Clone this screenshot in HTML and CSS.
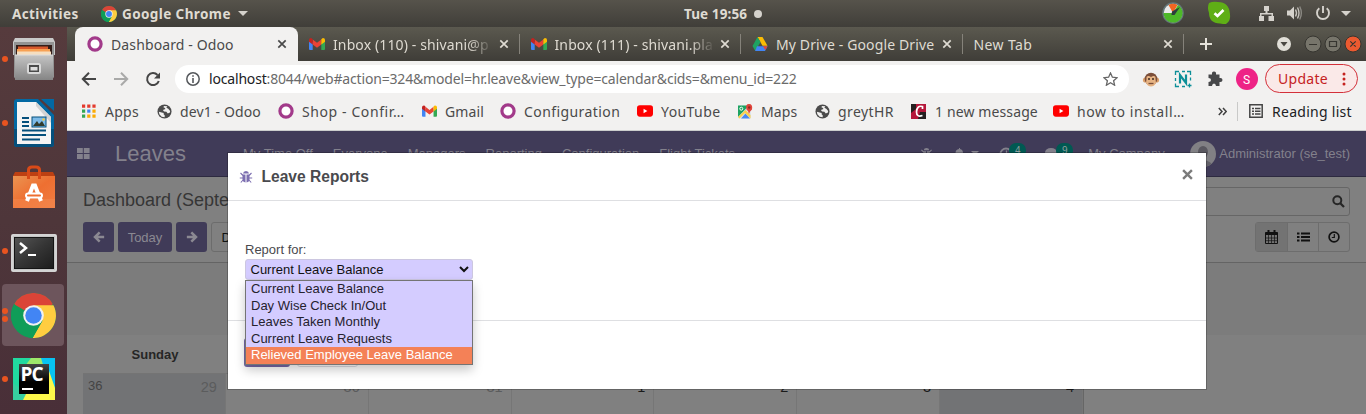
FILE: index.html
```html
<!DOCTYPE html>
<html lang="en">
<head>
<meta charset="utf-8">
<title>Dashboard - Odoo</title>
<link rel="stylesheet" href="styles.css">
</head>
<body>
<svg class="defs" width="0" height="0">
  <defs>
    <linearGradient id="metal" x1="0" y1="0" x2="0" y2="1"><stop offset="0" stop-color="#c4c4c4"/><stop offset="1" stop-color="#858585"/></linearGradient>
    <linearGradient id="bag" x1="0" y1="0" x2="1" y2="1"><stop offset="0" stop-color="#ea9452"/><stop offset=".5" stop-color="#ee6f31"/><stop offset="1" stop-color="#f07d43"/></linearGradient>
    <linearGradient id="screen" x1="0" y1="0" x2="1" y2="1"><stop offset="0" stop-color="#555"/><stop offset=".5" stop-color="#353535"/><stop offset="1" stop-color="#1c1c1c"/></linearGradient>
    <linearGradient id="pcbg" x1="0" y1="0" x2="0" y2="1"><stop offset="0" stop-color="#444"/><stop offset=".6" stop-color="#000"/></linearGradient>
    <symbol id="chrome" viewBox="0 0 48 48">
      <circle cx="24" cy="24" r="24" fill="#109d58"/>
      <path d="M24 24L3.2 12A24 24 0 0 1 44.8 12Z" fill="#db4437"/>
      <path d="M24 13H45.3A24 24 0 0 1 23 48L33.5 29.5Z" fill="#ffcd40"/>
      <path d="M3.6 11.4L14.5 29.5L24 35L33.5 29.5L23 48A24 24 0 0 1 3.6 11.4Z" fill="#109d58"/>
      <circle cx="24" cy="24" r="11" fill="#f1f1f1"/><circle cx="24" cy="24" r="8.8" fill="#4285f4"/>
    </symbol>
    <symbol id="gmail" viewBox="0 0 16 12">
      <path d="M0 2V11Q0 12 1 12H3.7V4.5Z" fill="#4285f4"/><path d="M16 2V11Q16 12 15 12H12.3V4.5Z" fill="#34a853"/>
      <path d="M3.7 1.5L8 4.8L12.3 1.5V6.5L8 9.8L3.7 6.5Z" fill="#ea4335"/>
      <path d="M0 2Q0 0 2 0Q3 0 3.7 1.5V6.5L0 3.7Z" fill="#c5221f"/><path d="M16 2Q16 0 14 0Q13 0 12.3 1.5V6.5L16 3.7Z" fill="#fbbc04"/>
    </symbol>
    <symbol id="ring" viewBox="0 0 16 16"><circle cx="8" cy="8" r="6.1" fill="#fff" stroke="#a23a8a" stroke-width="3.2"/></symbol>
    <symbol id="globe" viewBox="0 0 16 16"><circle cx="8" cy="8" r="7.5" fill="#4b4b4b"/><path d="M2 8.3L5 9L7.2 9.5L7 11L8.2 12V14L5 13.5L2.5 11ZM7.3 2L11 2.5L10 4L12 5L14 7.5L13.8 9L11.5 10L10 8.2L7.5 8L6.3 6.5L9 5.2L8.2 4L7 3.8Z" fill="#f2f1f0"/></symbol>
    <symbol id="youtube" viewBox="0 0 17 12"><rect width="17" height="12" rx="3" fill="#f00"/><path d="M7 3.5L11 6L7 8.5Z" fill="#fff"/></symbol>
    <symbol id="x" viewBox="0 0 10 10"><path d="M1.3 1.3L8.7 8.7M8.7 1.3L1.3 8.7" stroke="currentColor" stroke-width="1.7" fill="none"/></symbol>
    <symbol id="bug" viewBox="0 0 14 14"><path d="M4 3.500Q4.300 1 7 1T10 3.500ZM3.500 4.500H6.500V12.500Q3.500 12 3.500 9ZM7.500 4.500H10.500V9Q10.500 12 7.500 12.500Z" fill="currentColor"/><path d="M1.500 3L4 5.500M12.500 3L10 5.500M.8 8H4M13.200 8H10M1.800 12.500L4.500 9.500M12.200 12.500L9.500 9.500" stroke="currentColor" stroke-width="1.100"/></symbol>
    <symbol id="arrow" viewBox="0 0 14 14"><path d="M13 7H3M7.800 1.500L2.300 7L7.800 12.500" fill="none" stroke="currentColor" stroke-width="2.900"/></symbol>
  </defs>
</svg>

<header class="topbar">
  <span class="t activities">Activities</span>
  <svg class="top-chrome" width="16" height="16"><use href="#chrome"/></svg>
  <span class="t appname">Google Chrome</span>
  <svg class="caret" width="10" height="5"><path d="M0 0H10L5 5Z" fill="#d5d2cc"/></svg>
  <span class="t clock">Tue 19:56</span><i class="clock-dot"></i>
  <svg class="tray" width="200" height="27" viewBox="1160 0 200 27">
    <circle cx="1173" cy="13" r="10" fill="#e9e9e9" stroke="#64777a" stroke-width="1.500"/>
    <path d="M1163.500 13A9.500 9.500 0 1 0 1178 5L1173 13Z" fill="#4db828"/><path d="M1173 13L1168.500 5Q1173 2.500 1177.500 5Z" fill="#f26522"/><path d="M1171.500 15L1172 11.500L1180 7L1174.500 15Z" fill="#2d3d3d"/>
    <path d="M1209 3Q1213 1 1218 2Q1229 2 1230 14Q1231 21 1226 24Q1223 24 1220 23.500Q1209 23 1209 13Q1207 7 1209 3Z" fill="#5fae16"/><path d="M1214.500 13.200L1217.500 16L1223.500 10" fill="none" stroke="#fff" stroke-width="2.600"/>
    <path d="M1264 6H1269V11H1267.500V13H1273V16H1274V21H1268.500V16H1271.500V14.500H1261.500V16H1264V21H1259V16H1260V13H1265.500V11H1264Z" fill="#d5d2cc"/>
    <path d="M1287 10.500H1290L1294 6.500V19.500L1290 15.500H1287Z" fill="#d5d2cc"/><path d="M1295.500 9.500Q1297.500 13 1295.500 16.500M1297.500 7.500Q1300.500 13 1297.500 18.500" fill="none" stroke="#c5c2bc" stroke-width="1.400"/><path d="M1299.700 6.500Q1303 13 1299.700 19.500" fill="none" stroke="#8b8983" stroke-width="1.400"/>
    <path d="M1319.300 8.300A6 6 0 1 0 1326.700 8.300M1323 6V13" fill="none" stroke="#d5d2cc" stroke-width="1.900"/>
    <path d="M1341 11H1351L1346 16Z" fill="#d5d2cc"/>
  </svg>
</header>

<div class="desktop">
  <nav class="dock">
    <div class="app"><i class="dot"></i>
      <svg width="42" height="45" viewBox="0 0 42 45"><path d="M2 1H40L42 5V18H0V5Z" fill="#c9c9c9"/><path d="M1 5H41V40L39 43H3L1 40Z" fill="#929292"/><rect x="3" y="8" width="36" height="10" fill="#351e1a"/><path d="M5 9.500H35V17H5Z" fill="#d8592b"/><path d="M4 12H37V18H4Z" fill="#f7a154"/><path d="M4 14.500H38V18H4Z" fill="#f5dec0"/><path d="M2 18H40V43H2Z" fill="url(#metal)"/><path d="M2 18H40" stroke="#ddd"/><rect x="14" y="26" width="14" height="11" rx="2.500" fill="#d8d8d8"/><rect x="16" y="28" width="10" height="7" fill="#4a4a4a"/><rect x="17.500" y="30" width="7" height="3.500" fill="#ddd"/></svg></div>
    <div class="app"><i class="dot"></i>
      <svg width="40" height="48" viewBox="0 0 40 48"><path d="M3 0H24L40 16V45Q40 48 37 48H3Q0 48 0 45V3Q0 0 3 0Z" fill="#0369a3"/><path d="M0 30H40V45Q40 48 37 48H3Q0 48 0 45Z" fill="#05507c"/><path d="M27 0H40V12Z" fill="#0369a3"/><path d="M3 3H22L37 18V45H3Z" fill="#f4f4f4"/><path d="M22 3L37 18V24L22 7Z" fill="#d3d3d3"/><path d="M8 19H15M8 23H15M8 27H15M8 31.500H32M8 36H32M8 40.500H26" stroke="#05507c" stroke-width="2"/><rect x="18" y="18" width="14" height="10" fill="#7dbbe8" stroke="#05507c"/><path d="M19 27L23 22L25 25L28 22L31 27Z" fill="#313b2c"/><circle cx="29.500" cy="20.500" r="1.200" fill="#f7cb40"/></svg></div>
    <div class="app">
      <svg width="42" height="44" viewBox="0 0 42 44"><path d="M2 7H40L42 11V43H0V11Z" fill="#bd4012"/><path d="M0 11H42V43H0Z" fill="url(#bag)"/><path d="M0 34H42V43H0Z" fill="#f48a50" opacity=".5"/><path d="M15.500 14V5Q15.500 2 19 2H23Q26.500 2 26.500 5V14" fill="none" stroke="#d94a18" stroke-width="3"/><path d="M14 36L20 20.500H22L28 36" fill="none" stroke="#fff" stroke-width="4"/><rect x="13" y="28.500" width="16" height="4" rx="2" fill="#ee6f31" stroke="#fff" stroke-width="2"/></svg></div>
    <div class="app"><i class="dot"></i>
      <svg class="term" width="46" height="38" viewBox="0 0 46 38"><rect width="46" height="38" rx="2" fill="#c5c5c5"/><rect x="1" y="1" width="44" height="36" rx="1" fill="none" stroke="#e2e2e2"/><rect x="3.500" y="3.500" width="39" height="31" fill="url(#screen)" stroke="#141414"/><path d="M9 9L15 14L9 19" fill="none" stroke="#fff" stroke-width="2.500"/><path d="M17 21H25" stroke="#fff" stroke-width="2"/></svg></div>
    <div class="app"><i class="dot two"></i><div class="hl"><svg width="45" height="45"><use href="#chrome"/></svg></div></div>
    <div class="app"><i class="dot"></i>
      <svg width="42" height="42" viewBox="0 0 42 42"><rect width="42" height="42" fill="#21d789"/><path d="M18 0H42V20Z" fill="#07c3f2"/><path d="M14 0H28L34 20H0Z" fill="#9ee86a"/><path d="M0 0H18L6 16V30H0Z" fill="#21d9a0"/><path d="M0 25L15 36L10 42H0Z" fill="#36cfa0"/><path d="M36 10L42 28V42H10L14 34Z" fill="#fcf84a"/><path d="M30 0H42V30L35 10Z" fill="#07c3f2"/><rect x="6" y="6" width="30" height="30" fill="url(#pcbg)"/><text class="pc" x="7.500" y="23">PC</text><path d="M9 31H20" stroke="#fff" stroke-width="2"/></svg></div>
  </nav>

  <div class="browser">
    <div class="tabs">
      <div class="tab active"><svg class="fav" width="16" height="16"><use href="#ring"/></svg><span class="t">Dashboard - Odoo</span><svg class="close" width="10" height="10"><use href="#x"/></svg></div>
      <div class="tab"><svg class="fav" width="15" height="12"><use href="#gmail"/></svg><span class="t fade">Inbox (110) - shivani@p</span><svg class="close" width="10" height="10"><use href="#x"/></svg></div>
      <div class="tab"><svg class="fav" width="15" height="12"><use href="#gmail"/></svg><span class="t fade">Inbox (111) - shivani.pla</span><svg class="close" width="10" height="10"><use href="#x"/></svg></div>
      <div class="tab"><svg class="fav" width="15" height="14" viewBox="0 0 15 14"><path d="M5 0H10L15 8.800H10Z" fill="#fbbc04"/><path d="M5 0L8 5L2.800 14L0 9Z" fill="#1ea362"/><path d="M4.500 9.300H15L12.500 14H2.600Z" fill="#4285f4"/><path d="M10.500 9.300H15L12.800 13Z" fill="#ea4335"/></svg><span class="t">My Drive - Google Drive</span><svg class="close" width="10" height="10"><use href="#x"/></svg></div>
      <div class="tab newtab"><span class="t">New Tab</span><svg class="close" width="10" height="10"><use href="#x"/></svg></div>
      <svg class="plus" width="12" height="12"><path d="M6 0V12M0 6H12" stroke="#e5e2da" stroke-width="2"/></svg>
      <svg class="winctl" width="90" height="20" viewBox="1275 34 90 20"><circle cx="1284" cy="44" r="7" fill="#e1dfd8"/><path d="M1280.500 42H1287.500L1284 46.500Z" fill="#4a4842"/>
        <g stroke="#363530"><circle cx="1313" cy="44" r="8" fill="#77756b"/><circle cx="1333" cy="44" r="8" fill="#77756b"/><circle cx="1353" cy="44" r="8" fill="#ec5a30"/></g>
        <path d="M1309 44.500H1317M1329.500 41.500H1336.500V46.500H1329.500ZM1350.300 41.300L1355.700 46.700M1355.700 41.300L1350.300 46.700" fill="none" stroke="#363530" stroke-width="1.200"/></svg>
    </div>

    <div class="toolbar">
      <svg class="nav" width="86" height="20" viewBox="80 69 86 20"><path d="M96 79H83M89 72.800L82.800 79L89 85.200" fill="none" stroke="#454545" stroke-width="2"/><path d="M114 79H127M121 72.800L127.200 79L121 85.200" fill="none" stroke="#a9a9a8" stroke-width="2"/><path d="M157.500 75A6 6 0 1 0 158.800 81" fill="none" stroke="#454545" stroke-width="2"/><path d="M160 72.500V78.500H154Z" fill="#454545"/></svg>
      <div class="omni">
        <svg width="14" height="14"><circle cx="7" cy="7" r="6.200" fill="none" stroke="#55585c" stroke-width="1.500"/><path d="M7 6V11M7 3.200V4.800" stroke="#55585c" stroke-width="1.600"/></svg>
        <span class="t url"><b>localhost</b>:8044/web#action=324&amp;model=hr.leave&amp;view_type=calendar&amp;cids=&amp;menu_id=222</span>
        <svg class="star" width="15" height="14" viewBox="0 0 15 14"><path d="M7.500 1L9.400 5.200L14 5.700L10.600 8.700L11.600 13.200L7.500 10.800L3.400 13.200L4.400 8.700L1 5.700L5.600 5.200Z" fill="none" stroke="#666" stroke-width="1.300"/></svg>
      </div>
      <svg class="ext" width="120" height="24" viewBox="1139 67 120 24">
        <circle cx="1145.500" cy="80" r="2.600" fill="#dba06b"/><circle cx="1156.500" cy="80" r="2.600" fill="#dba06b"/><circle cx="1151" cy="79" r="6.300" fill="#7c4f3a"/><path d="M1146.500 79Q1146 75.500 1149 76L1151 77L1153 76Q1156 75.500 1155.500 79L1156 83Q1154 86.500 1151 86.500T1146 83Z" fill="#e7b484"/><circle cx="1149" cy="79" r="1" fill="#3d2a20"/><circle cx="1153" cy="79" r="1" fill="#3d2a20"/><path d="M1148.500 83.500H1153.500" stroke="#7c4f3a" stroke-width="1.300"/>
        <path d="M1175.500 75V71.500H1179M1182 71.500H1185M1187 71.500H1190.500V75M1190.500 77.500V80.500M1175.500 78V81M1175.500 83.500V86.500H1179M1182 86.500H1185M1187.500 85.500H1191.500M1189.500 83.500V87.500" fill="none" stroke="#0c8f98" stroke-width="1.300"/><path d="M1180 83.500V75L1186 83V74.500" fill="none" stroke="#0c8f98" stroke-width="2.200"/>
        <path d="M1208.500 74.500H1212Q1211.500 71.500 1214 71.500T1216 74.500H1219.500V78Q1222.500 77.500 1222.500 80T1219.500 82V86H1216Q1215.800 83.500 1214 83.500T1212 86H1208.500V82Q1211 82 1211 80T1208.500 78Z" fill="#47484a"/>
        <circle cx="1247" cy="79" r="11" fill="#ee2386"/><text class="avatar-s" x="1243" y="83.500">S</text>
      </svg>
      <div class="update"><span class="t">Update</span><svg width="4" height="14"><g fill="#c5221f"><circle cx="2" cy="2" r="1.500"/><circle cx="2" cy="7" r="1.500"/><circle cx="2" cy="12" r="1.500"/></g></svg></div>
    </div>

    <div class="bookmarks">
      <div class="bm b1"><svg width="14" height="14"><g fill="#e33b2e"><path d="M0 .5H3.200V3.700H0ZM5.200 .5H8.400V3.700H5.200ZM10.400 .5H13.600V3.700H10.400Z"/></g><path d="M0 5.500H3.200V8.700H0ZM0 10.500H3.200V13.700H0Z" fill="#34a853"/><path d="M5.200 5.500H8.400V8.700H5.200Z" fill="#4285f4"/><path d="M10.400 5.500H13.600V8.700H10.400ZM5.200 10.500H8.400V13.700H5.200ZM10.400 10.500H13.600V13.700H10.400Z" fill="#fbab04"/></svg><span class="t">Apps</span></div>
      <div class="bm b2"><svg width="15" height="15"><use href="#globe"/></svg><span class="t">dev1 - Odoo</span></div>
      <div class="bm b3"><svg width="16" height="16"><use href="#ring"/></svg><span class="t">Shop - Confir…</span></div>
      <div class="bm b4"><svg width="15" height="12"><use href="#gmail"/></svg><span class="t">Gmail</span></div>
      <div class="bm b5"><svg width="16" height="16"><use href="#ring"/></svg><span class="t">Configuration</span></div>
      <div class="bm b6"><svg width="16" height="12"><use href="#youtube"/></svg><span class="t">YouTube</span></div>
      <div class="bm b7"><svg width="15" height="15" viewBox="0 0 15 15"><rect y="1.500" width="13" height="13" rx="1" fill="#dce6ee"/><path d="M0 1.500H11L0 13Z" fill="#1ea362"/><path d="M3 14.500L7.500 9.500L12 14.500Z" fill="#4a89f3"/><path d="M0 13L7.500 6L12.500 11V14.500L7 9L1.500 14.500Z" fill="#fbd14b"/><circle cx="3.300" cy="4.700" r="1.500" fill="none" stroke="#fff"/><path d="M11 10Q10.500 6.500 8.500 5.500Q7 0 11 0T14 5.500Q11.700 7 11 10Z" fill="#e0433a"/><circle cx="11.200" cy="3.500" r="1.200" fill="#8d2a20"/></svg><span class="t">Maps</span></div>
      <div class="bm b8"><svg width="15" height="15"><use href="#globe"/></svg><span class="t">greytHR</span></div>
      <div class="bm b9"><svg width="15" height="15"><rect width="15" height="15" fill="#b5173a"/><path d="M0 0H5V5L0 9ZM9 8H15V15H7Z" fill="#252020"/><path d="M11.500 5V2.500Q6 1 5.500 8Q5.500 13.500 11.500 11.500" fill="none" stroke="#fff" stroke-width="1.700"/></svg><span class="t">1 new message</span></div>
      <div class="bm b10"><svg width="16" height="12"><use href="#youtube"/></svg><span class="t">how to install…</span></div>
      <svg class="more" width="9" height="9"><path d="M.8 1L4 4.500L.8 8M5 1L8.200 4.500L5 8" fill="none" stroke="#404040" stroke-width="1.500"/></svg>
      <div class="bm reading"><svg width="14" height="14"><path d="M.8 .8H13.200V13.200H.8ZM3 4.500H5M6 4.500H11.500M3 7.200H5M6 7.200H11.500M3 10H5M6 10H11.500" fill="none" stroke="#454545" stroke-width="1.500"/></svg><span class="t">Reading list</span></div>
    </div>

    <main class="odoo">
      <div class="navbar">
        <svg class="apps" width="13" height="11"><path d="M0 0H5.800V5H0ZM6.800 0H12.600V5H6.800ZM0 6H5.800V11H0ZM6.800 6H12.600V11H6.800Z" fill="#83818c"/></svg>
        <span class="brand">Leaves</span>
        <div class="menu"><span>My Time Off</span><span>Everyone</span><span>Managers</span><span>Reporting</span><span>Configuration</span><span>Flight Tickets</span></div>
        <div class="systray">
          <svg width="13" height="13"><use href="#bug"/></svg>
          <svg class="bell" width="28" height="14"><path d="M1 11Q2.500 9 2.500 6Q2.500 2.500 6 2V1H7V2Q10 2.500 10 6Q10 9 12 11ZM18 4H26L22 8Z" fill="currentColor"/></svg>
          <span class="notice act"><svg width="14" height="14"><circle cx="7" cy="7" r="5.500" fill="none" stroke="currentColor" stroke-width="1.800"/><path d="M7.500 3.500V7.500H4.500" fill="none" stroke="currentColor" stroke-width="1.300"/></svg><i>4</i></span>
          <span class="notice msg"><svg width="14" height="14"><ellipse cx="6" cy="5.500" rx="6" ry="4.500" fill="currentColor"/></svg><i>9</i></span>
          <span class="company">My Company</span>
          <svg class="avatar" width="26" height="26"><clipPath id="av"><circle cx="13" cy="13" r="13"/></clipPath><g clip-path="url(#av)"><rect width="26" height="26" fill="#818084"/><ellipse cx="13" cy="11" rx="5" ry="6" fill="#59575f"/><path d="M3 26Q4 18 13 19T23 26Z" fill="#626068"/></g></svg>
          <span class="user">Administrator (se_test)</span>
        </div>
      </div>
      <div class="control">
        <div class="row"><span class="crumb">Dashboard (September 2021)</span><div class="search"><svg width="13" height="13"><circle cx="5.300" cy="5.300" r="4" fill="none" stroke="#262626" stroke-width="2"/><path d="M8.300 8.300L12 12" stroke="#262626" stroke-width="2.300"/></svg></div></div>
        <div class="row second">
          <div class="btns"><span class="btn"><svg width="12" height="12"><use href="#arrow"/></svg></span><span class="btn today">Today</span><span class="btn"><svg class="flip" width="12" height="12"><use href="#arrow"/></svg></span><span class="btn day">Day</span></div>
          <div class="views"><span class="on"><svg width="13" height="14"><path d="M.5 2.500H12.500V13.500H.5Z" fill="none" stroke="currentColor"/><path d="M.5 2.500H12.500V5H.5ZM2.500 0H4.500V3H2.500ZM8.500 0H10.500V3H8.500Z" fill="currentColor"/><path d="M3.500 5V13M6.500 5V13M9.500 5V13M0 8H13M0 10.700H13" stroke="currentColor" stroke-width=".7"/></svg></span><span><svg width="13" height="10"><path d="M0 1.500H2.500M4 1.500H13M0 5H2.500M4 5H13M0 8.500H2.500M4 8.500H13" stroke="currentColor" stroke-width="2.100"/></svg></span><span><svg width="12" height="12"><circle cx="6" cy="6" r="4.900" fill="none" stroke="currentColor" stroke-width="1.700"/><path d="M6.300 3V6.500H3.800" fill="none" stroke="currentColor" stroke-width="1.200"/></svg></span></div>
        </div>
      </div>
      <div class="spacer"></div>
      <div class="calendar">
        <div class="dow"><span>Sunday</span></div>
        <div class="days"><div class="wk"><em>36</em><span class="off">29</span></div><div><span class="off">30</span></div><div><span class="off">31</span></div><div><span>1</span></div><div><span>2</span></div><div><span>3</span></div><div class="wk"><span>4</span></div></div>
      </div>

      <section class="modal">
        <div class="mhead"><svg width="14" height="14"><use href="#bug"/></svg><h4>Leave Reports</h4><svg class="mclose" width="11" height="11" viewBox="0 0 10 10"><path d="M1 1L9 9M9 1L1 9" stroke="#7b7b7b" stroke-width="2.200"/></svg></div>
        <div class="mbody"><label>Report for:</label>
          <div class="select"><span>Current Leave Balance</span><svg width="10" height="7"><path d="M1 1L5 5L9 1" fill="none" stroke="#111" stroke-width="2"/></svg>
            <ul class="options"><li>Current Leave Balance</li><li>Day Wise Check In/Out</li><li>Leaves Taken Monthly</li><li>Current Leave Requests</li><li class="sel">Relieved Employee Leave Balance</li></ul>
          </div>
        </div>
        <div class="mfoot"><span class="primary"></span><span class="secondary"></span></div>
      </section>
    </main>
  </div>
</div>
</body>
</html>
```
FILE: styles.css
```css
* { box-sizing: border-box; }
body { margin: 0; width: 1366px; height: 414px; overflow: hidden; font-family: "Liberation Sans", sans-serif; font-size: 13px; }
svg { display: block; flex: none; }
.defs { position: absolute; }
.t { font-family: "Noto Sans", sans-serif; font-size: 14px; white-space: nowrap; letter-spacing: .12px; }

.topbar { height: 27px; display: flex; align-items: center; padding-left: 12px; background: linear-gradient(#56534b, #403e39); color: #dfdbd2; }
.topbar .t { font-weight: 700; font-size: 13.5px; letter-spacing: .4px; flex: none; }
.activities { width: 89px; }
.appname { width: 110px; margin-left: 5px; }
.caret { margin-left: 6px; }
.topbar .clock { width: 67px; margin-left: 436px; letter-spacing: .1px; }
.clock-dot { width: 8px; height: 8px; border-radius: 50%; background: #d5d2cc; margin-left: 3px; }
.tray { margin-left: auto; margin-right: 6px; }

.desktop { display: flex; height: 387px; }
.dock { width: 67px; flex: none; background: linear-gradient(#563b3d, #4e363a 50%, #492f38); }
.app { position: relative; height: 64px; display: flex; align-items: center; justify-content: center; }
.dot { position: absolute; left: 2px; top: 29px; width: 6px; height: 6px; border-radius: 50%; background: #e95420; }
.dot.two { top: 25px; box-shadow: 0 8px 0 #e95420; }
.term { margin-top: 4px; }
.hl { width: 62px; height: 62px; margin-right: 1px; border-radius: 4px; background: #6d555c; display: grid; place-items: center; }
.pc { font: bold 19px "Open Sans", sans-serif; fill: #fff; letter-spacing: -1px; }

.browser { width: 1299px; display: flex; flex-direction: column; }
.tabs { height: 34px; flex: none; display: flex; padding-left: 8px; background: linear-gradient(#5b594f, #3f3d38); }
.tab { width: 221.500px; display: flex; align-items: center; padding: 0 11px 0 11px; color: #dfdbd2; background: linear-gradient(#85827a, #85827a) right center / 1px 20px no-repeat; }
.tab .t { margin-left: 8px; overflow: hidden; width: 162px; }
.tab .fav { width: 16px; }
.tab .close { margin-left: auto; }
.tab.active { width: 223px; background: #f2f1f0; color: #4a4a4a; border-radius: 8px 8px 0 0; padding-left: 12px; }
.tab.newtab { padding-left: 3px; width: 221px; }
.newtab .t { letter-spacing: .4px; }
.fade { -webkit-mask-image: linear-gradient(90deg, #000 135px, transparent 160px); mask-image: linear-gradient(90deg, #000 135px, transparent 160px); }
.plus { margin: 11px 0 0 16px; }
.winctl { margin: 7px 1px 0 auto; }

.toolbar { height: 35px; flex: none; display: flex; align-items: center; background: #f2f1f0; padding-left: 13px; }
.omni { width: 954px; height: 28px; margin-left: 9px; border-radius: 14px; background: #fff; display: flex; align-items: center; padding: 0 11px; }
.omni .url { margin-left: 9px; color: #6b6b6b; letter-spacing: -.175px; }
.url b { font-weight: 400; color: #202124; }
.star { margin-left: auto; }
.ext { margin-left: 10px; }
.avatar-s { font: 12px Roboto, sans-serif; fill: #fff; }
.update { margin-left: 6px; width: 93px; height: 29px; border: 1px solid #d3303a; border-radius: 15px; background: #fae9e8; color: #c5221f; display: flex; align-items: center; justify-content: space-between; padding: 0 11px 0 12px; }
.update .t { letter-spacing: .3px; }

.bookmarks { height: 35px; flex: none; display: flex; align-items: center; background: #f2f1f0; border-bottom: 1px solid #cbcdcc; padding: 0 0 4px 15px; color: #4a4a4a; }
.bm { display: flex; align-items: center; flex: none; }
.bm .t { margin-left: 8px; }
.b1 { width: 75px; } .b2 { width: 121px; } .b3 { width: 144px; } .b4 { width: 78px; } .b5 { width: 137px; }
.b6 { width: 101px; } .b7 { width: 77px; } .b8 { width: 96px; } .b9 { width: 142px; } .b10 { width: 165px; }
.b1 .t, .reading .t { margin-left: 9px; letter-spacing: .28px; }
.b3 .t, .b10 .t { letter-spacing: .6px; }
.b5 .t, .b6 .t, .b8 .t { letter-spacing: .42px; }
.b9 .t { margin-left: 9px; }
.reading { margin-left: 10px; border-left: 1px solid #c9c9c8; padding-left: 11px; color: #202124; }

.odoo { position: relative; flex: 1; background: #808080; }
.navbar { height: 46px; background: #403b58; border-bottom: 1px solid #2d2a40; display: flex; align-items: center; padding-left: 10px; color: #83818c; }
.brand { font-size: 22px; margin-left: 25px; width: 128px; }
.menu { display: flex; gap: 20px; }
.systray { margin-left: auto; margin-right: 16px; display: flex; align-items: center; }
.bell { margin-left: 20px; }
.notice { display: flex; position: relative; width: 46px; }
.notice.msg { width: 43px; }
.act { margin-left: 18px; }
.notice i { position: absolute; left: 10px; top: -4px; width: 17px; height: 15px; border-radius: 7px; background: #005952; color: #8f9f9d; font: 10px/15px "Liberation Sans", sans-serif; text-align: center; }
.msg i { left: 11px; }
.company { width: 102px; }
.user { margin-left: 3px; }

.control { height: 86px; border-bottom: 1px solid #646464; padding: 10px 16px 0; }
.row { display: flex; justify-content: space-between; }
.crumb { font-size: 18px; line-height: 26px; color: #363636; }
.search { width: 450px; height: 29px; border: 1px solid #666; border-radius: 3px; display: flex; align-items: center; justify-content: flex-end; padding-right: 4px; }
.second { margin-top: 6px; }
.btns { display: flex; gap: 4px; }
.btn { width: 31px; height: 30px; border-radius: 3px; background: #403b58; color: #8b8992; display: grid; place-items: center; }
.today { width: 54px; }
.day { width: 44px; background: #808080; border: 1px solid #6c6c6c; color: #111; }
.flip { transform: scaleX(-1); }
.views { display: flex; height: 30px; border: 1px solid #6d6d6d; border-radius: 3px; color: #111; }
.views span { width: 31px; display: grid; place-items: center; border-left: 1px solid #6d6d6d; }
.views .on { background: #737373; border-left: 0; }
.spacer { height: 72px; background: #7c7c7c; }
.calendar { margin-left: 16px; width: 1001px; }
.dow { height: 38px; }
.dow span { display: block; width: 144px; text-align: center; line-height: 39px; font-weight: bold; color: #262626; }
.days { display: grid; grid-template-columns: repeat(7, 1fr); height: 42px; border-right: 1px solid #666; }
.days div { border-right: 1px solid #767676; border-top: 1px solid #747474; display: flex; justify-content: space-between; padding: 4px 8px 0 5px; color: #1a1a1a; }
.days .wk { background: #727375; }
.days em { font-style: normal; font-size: 13px; color: #444; }
.days span { margin-left: auto; font-size: 14.5px; line-height: 19px; }
.days .off { color: #5b5c5d; }

.modal { position: absolute; left: 161px; top: 22px; width: 978px; height: 236px; background: #fff; outline: 1px solid rgba(0,0,0,.22); }
.mhead { height: 48px; border-bottom: 1px solid #dedfe2; display: flex; align-items: center; padding: 0 13px 0 11px; color: #7c6eb0; }
.mhead h4 { margin: 0 0 0 8.500px; font-size: 15.600px; color: #4a4a4e; }
.mclose { margin: -4px 0 0 auto; }
.mbody { height: 119px; padding: 41px 17px 0; color: #4a4a4e; }
.mbody label { display: block; line-height: 15px; margin-bottom: 2px; }
.select { position: relative; width: 228px; height: 21px; border: 1px solid #ccc7e0; border-radius: 3px; background: #d4ccff; color: #111; display: flex; align-items: center; justify-content: space-between; padding: 0 3px 0 4.500px; }
.options { position: absolute; left: -1px; top: 20px; width: 228px; height: 85px; margin: 0; padding: 0; list-style: none; border: 1px solid #747474; background: #d4ccff; box-shadow: 0 5px 10px rgba(0,0,0,.22); z-index: 2; }
.options li { height: 16.500px; line-height: 16px; padding-left: 5px; color: #25222e; }
.options .sel { height: 17px; background: #f48157; color: #fff; }
.mfoot { border-top: 1px solid #dedfe2; padding: 17px 16px; display: flex; gap: 7px; }
.primary { width: 46px; height: 29px; border-radius: 3px; background: #7468a6; }
.secondary { width: 61px; height: 29px; border: 1px solid #dcdce2; border-radius: 3px; }
```
